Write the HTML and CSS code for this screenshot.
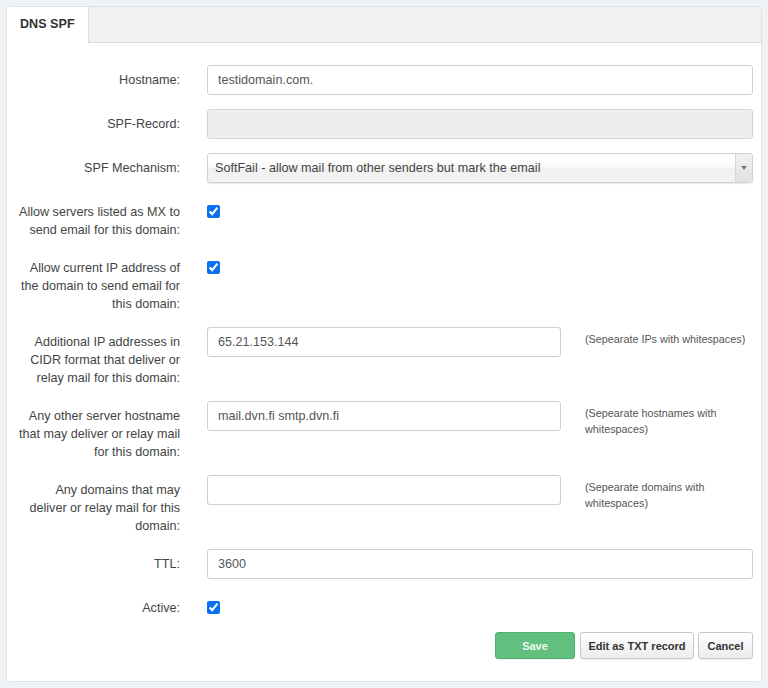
FILE: index.html
```html
<!DOCTYPE html>
<html>
<head>
<meta charset="utf-8">
<link rel="stylesheet" href="styles.css">
</head>
<body>
<div class="panel">
  <div class="tabs">
    <div class="tab">DNS SPF</div>
  </div>
  <form class="form">
    <div class="row">
      <label class="lbl">Hostname:</label>
      <div class="ctl"><input class="inp" type="text" value="testidomain.com."></div>
    </div>
    <div class="row">
      <label class="lbl">SPF-Record:</label>
      <div class="ctl"><input class="inp" type="text" disabled value=""></div>
    </div>
    <div class="row">
      <label class="lbl">SPF Mechanism:</label>
      <div class="ctl">
        <div class="select">
          <span class="sel-text">SoftFail - allow mail from other senders but mark the email</span>
          <span class="sel-arrow"><span class="tri"></span></span>
        </div>
      </div>
    </div>
    <div class="row">
      <label class="lbl">Allow servers listed as MX to send email for this domain:</label>
      <div class="ctl"><input class="chk" type="checkbox" checked></div>
    </div>
    <div class="row">
      <label class="lbl">Allow current IP address of the domain to send email for this domain:</label>
      <div class="ctl"><input class="chk" type="checkbox" checked></div>
    </div>
    <div class="row">
      <label class="lbl">Additional IP addresses in CIDR format that deliver or relay mail for this domain:</label>
      <div class="ctl split">
        <input class="inp" type="text" value="65.21.153.144">
        <div class="help">(Sepearate IPs with whitespaces)</div>
      </div>
    </div>
    <div class="row">
      <label class="lbl">Any other server hostname that may deliver or relay mail for this domain:</label>
      <div class="ctl split">
        <input class="inp" type="text" value="mail.dvn.fi smtp.dvn.fi">
        <div class="help">(Sepearate hostnames with whitespaces)</div>
      </div>
    </div>
    <div class="row">
      <label class="lbl">Any domains that may deliver or relay mail for this domain:</label>
      <div class="ctl split">
        <input class="inp" type="text" value="">
        <div class="help">(Sepearate domains with whitespaces)</div>
      </div>
    </div>
    <div class="row">
      <label class="lbl">TTL:</label>
      <div class="ctl"><input class="inp" type="text" value="3600"></div>
    </div>
    <div class="row">
      <label class="lbl">Active:</label>
      <div class="ctl"><input class="chk" type="checkbox" checked></div>
    </div>
    <div class="actions">
      <button type="button" class="btn btn-save">Save</button>
      <button type="button" class="btn btn-edit">Edit as TXT record</button>
      <button type="button" class="btn btn-cancel">Cancel</button>
    </div>
  </form>
</div>
</body>
</html>
```

FILE: styles.css
```css
* { box-sizing: border-box; }
html, body { margin: 0; padding: 0; }
body {
  background: #eff2f5;
  padding: 6px;
  font-family: "Liberation Sans", Arial, sans-serif;
  font-size: 12.6px;
  color: #444;
  height: 688px;
}
.panel {
  background: #fff;
  border: 1px solid #dde1e5;
  border-radius: 3px;
  height: 676px;
  overflow: hidden;
}
.tabs {
  height: 36px;
  background: #f1f1f1;
  border-bottom: 1px solid #dcdcdc;
  display: flex;
}
.tab {
  background: #fff;
  height: 36px;
  width: 82px;
  padding: 0 0 0 13px;
  border-right: 1px solid #dcdcdc;
  font-weight: bold;
  font-size: 12.6px;
  color: #333;
  line-height: 35px;
  white-space: nowrap;
  flex: none;
}
.form {
  padding: 22px 8px 0 8px;
  display: flex;
  flex-direction: column;
  gap: 14px;
}
.row {
  display: grid;
  grid-template-columns: 165px 1fr;
  column-gap: 27px;
  align-items: start;
}
.lbl {
  text-align: right;
  line-height: 18px;
  padding-top: 6px;
  color: #444;
}
.ctl { min-width: 0; }
.split {
  display: grid;
  grid-template-columns: 1fr 168px;
  column-gap: 24px;
  align-items: start;
}
.inp {
  display: block;
  width: 100%;
  height: 30px;
  border: 1px solid #cfcfcf;
  border-radius: 3px;
  padding: 0 10px;
  font-family: "Liberation Sans", Arial, sans-serif;
  font-size: 12.6px;
  color: #555;
  background: #fff;
  outline: none;
}
.inp:disabled { background: #eeeeee; border-color: #d4d4d4; }
.help {
  font-size: 10.8px;
  line-height: 16px;
  color: #555;
  padding-top: 4px;
}
.select {
  height: 30px;
  border: 1px solid #d0d0d0;
  border-radius: 3px;
  background: linear-gradient(#ffffff 20%, #f7f7f7 50%, #f0f0f0 52%, #f4f4f4 100%);
  box-shadow: 0 1px 1px rgba(0,0,0,0.08);
  display: flex;
  align-items: center;
  overflow: hidden;
}
.sel-text {
  flex: 1;
  padding-left: 7px;
  color: #444;
  white-space: nowrap;
  overflow: hidden;
}
.sel-arrow {
  width: 17px;
  height: 100%;
  border-left: 1px solid #d6d6d6;
  background: linear-gradient(#f0f0f0, #e2e2e2);
  display: flex;
  align-items: center;
  justify-content: center;
}
.tri {
  width: 0; height: 0;
  border-left: 3px solid transparent;
  border-right: 3px solid transparent;
  border-top: 4px solid #777;
}
.chk {
  display: block;
  margin: 8px 0 0 0;
  width: 13px;
  height: 13px;
  accent-color: #0b72ef;
}
.actions {
  display: flex;
  justify-content: flex-end;
  gap: 4px;
  margin-top: 1px;
}
.btn {
  height: 27px;
  padding: 0;
  border: 1px solid #c8c8c8;
  border-radius: 3px;
  background: linear-gradient(#ffffff, #ececec);
  font-family: "Liberation Sans", Arial, sans-serif;
  font-weight: bold;
  font-size: 11px;
  color: #333;
  box-shadow: 0 1px 1px rgba(0,0,0,0.06);
  text-align: center;
}
.btn-save {
  width: 80px;
  margin-right: 1px;
  background: #62c07e;
  border-color: #52b06e;
  color: #eef8f1;
}
.btn-edit { width: 114px; }
.btn-cancel { width: 55px; }
```
